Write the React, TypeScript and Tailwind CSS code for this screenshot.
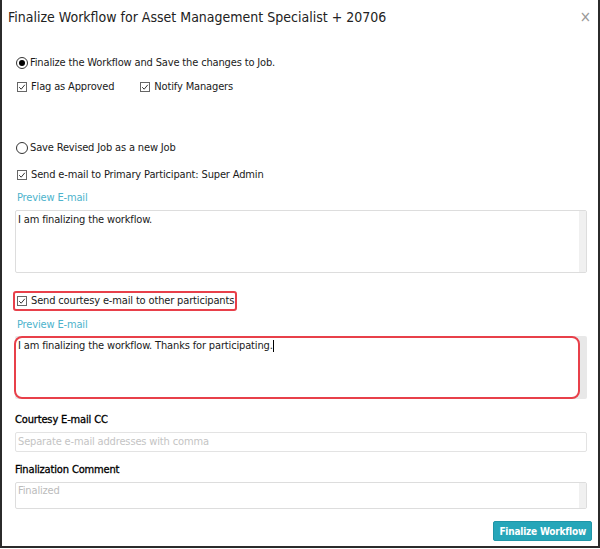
import React from "react";

const font = { fontFamily: '"DejaVu Sans Condensed", "DejaVu Sans", sans-serif' };

const Radio = ({ checked }: { checked?: boolean }) => (
  <span className="w-[12px] h-[12px] rounded-full border border-[#333] flex items-center justify-center shrink-0">
    {checked && <span className="w-[6px] h-[6px] rounded-full bg-black" />}
  </span>
);

const Check = () => (
  <span className="w-[10px] h-[10px] border border-[#666] flex items-center justify-center shrink-0 bg-white">
    <svg width="8" height="8" viewBox="0 0 8 8">
      <path d="M1.2 4.2 L3.2 6.2 L6.8 1.8" fill="none" stroke="#333" strokeWidth="1" />
    </svg>
  </span>
);

const Preview = () => (
  <div className="h-[16px] mt-[5px] pt-[2px] flex items-center pl-[2px] text-[#4db3cc]">Preview E-mail</div>
);

export default function App() {
  return (
    <div style={font} className="w-[600px] h-[549px] bg-white text-[#1a1a1a] overflow-hidden">
      <div className="w-full h-[548px] border-l-2 border-r-2 border-b-2 border-[#2b2b2b] flex flex-col">
        {/* Header */}
        <div className="h-[34px] pt-[1px] flex items-center justify-between pl-[6px] pr-[7px]">
          <h1 className="text-[14px] text-[#222]">Finalize Workflow for Asset Management Specialist + 20706</h1>
          <span className="text-[#999] text-[15px] leading-none">×</span>
        </div>

        <div className="flex flex-col pl-[13px] pr-[11px] text-[11px] tracking-[-0.15px]">
          <div className="h-[20px] mt-[18px] pt-[2px] flex items-center gap-[2px] pl-[1px]">
            <Radio checked />
            <span>Finalize the Workflow and Save the changes to Job.</span>
          </div>
          <div className="h-[20px] mt-[4px] pt-[2px] flex items-center pl-[2px]">
            <Check />
            <span className="ml-[4px]">Flag as Approved</span>
            <span className="ml-[26px]"><Check /></span>
            <span className="ml-[4px]">Notify Managers</span>
          </div>

          <div className="h-[20px] mt-[41px] pt-[2px] flex items-center gap-[2px] pl-[1px]">
            <Radio />
            <span>Save Revised Job as a new Job</span>
          </div>
          <div className="h-[20px] mt-[7px] pt-[2px] flex items-center gap-[4px] pl-[2px]">
            <Check />
            <span>Send e-mail to Primary Participant: Super Admin</span>
          </div>
          <Preview />
          <div className="h-[63px] mt-[5px] border border-[#ddd] rounded-[2px] flex">
            <div className="flex-1 px-[2px] py-[1px]">I am finalizing the workflow.</div>
            <div className="w-[7px] bg-[#f0f0f0]" />
          </div>

          {/* highlighted courtesy option */}
          <div className="h-[20px] mt-[18px] ml-[-2px] self-start flex items-center gap-[4px] pl-[2px] pr-[1px] border-2 border-[#e8404a] rounded-[3px]">
            <Check />
            <span>Send courtesy e-mail to other participants</span>
          </div>
          <Preview />
          <div className="h-[63px] mt-[4px] bg-[#e8e8e8] rounded-[2px] flex">
            <div className="flex-1 ml-[-1px] bg-white border-2 border-[#e8404a] rounded-[8px] px-[2px] leading-[16px]">
              I am finalizing the workflow. Thanks for participating.<span className="inline-block w-px h-[12px] bg-black align-middle" />
            </div>
            <div className="w-[7px]" />
          </div>

          <div className="h-[16px] mt-[12px] pt-[2px] flex items-center text-black [-webkit-text-stroke:0.3px_#000]">Courtesy E-mail CC</div>
          <div className="h-[20px] mt-[5px] border border-[#e3e3e3] rounded-[2px] flex items-center px-[2px] text-[#c4c4c4]">
            Separate e-mail addresses with comma
          </div>

          <div className="h-[16px] mt-[9px] pt-[2px] flex items-center text-black [-webkit-text-stroke:0.3px_#000]">Finalization Comment</div>
          <div className="h-[27px] mt-[5px] border border-[#ddd] rounded-[2px] flex">
            <div className="flex-1 px-[2px] text-[#bbb]">Finalized</div>
            <div className="w-[7px] bg-[#f0f0f0]" />
          </div>

          <div className="mt-[12px] self-end flex mr-[-5px]">
            <button className="h-[20px] px-[5px] bg-[#26a6b9] text-white font-bold text-[10px] tracking-[-0.2px] rounded-[2px] border border-[#1f95a7]">
              Finalize Workflow
            </button>
          </div>
        </div>
      </div>
    </div>
  );
}
